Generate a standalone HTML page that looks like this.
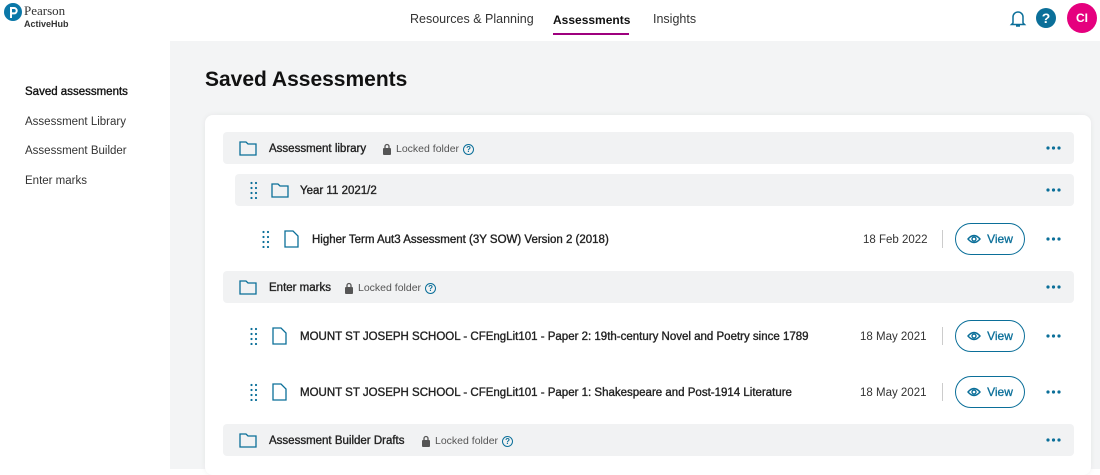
<!DOCTYPE html><html><head><style>
*{margin:0;padding:0;box-sizing:border-box}
body{width:1100px;height:469px;overflow:hidden;background:#fff;font-family:"Liberation Sans",sans-serif;color:#222;position:relative}
.a{position:absolute}
.nav{font-size:12.5px;color:#333;top:12px}
.side{left:25px;font-size:11.5px;color:#333}
.main{left:170px;top:41px;width:930px;height:428px;background:#f3f4f5}
.card{left:205px;top:115px;width:886px;height:360px;background:#fff;border-radius:8px;box-shadow:0 0 6px rgba(0,0,0,.06)}
.row{background:#f1f2f3;border-radius:4px;height:32px}
.t{font-size:11.5px;color:#222;-webkit-text-stroke:0.35px #222;white-space:nowrap}
.lk{font-size:10.5px;color:#555;display:flex;align-items:center;gap:4px}
.date{font-size:11.5px;color:#333}
.view{width:70px;height:32px;border:1.5px solid #0b6f99;border-radius:16px;color:#0b6f99;font-size:12px;-webkit-text-stroke:0.3px #0b6f99;display:flex;align-items:center;justify-content:center;gap:6px}
.sep{width:1px;height:18px;background:#ccc}
.q{width:11px;height:11px;border:1.2px solid #0b6f99;border-radius:50%;color:#0b6f99;font-size:8px;text-align:center;line-height:9px;font-weight:bold}
</style></head><body>
<svg class="a" style="left:4px;top:3px" width="18" height="18"><circle cx="9" cy="9" r="9" fill="#0b78a8"/><path d="M7 15V5h3a2.7 2.7 0 0 1 0 5.4h-3" stroke="#fff" stroke-width="2" fill="none"/></svg>
<div class="a" style="left:24px;top:3px;font-family:'Liberation Serif',serif;font-size:13px;color:#333">Pearson</div>
<div class="a" style="left:24px;top:19px;font-size:9px;font-weight:bold;color:#333">ActiveHub</div>
<div class="a nav" style="left:410px">Resources &amp; Planning</div>
<div class="a nav" style="left:553px;font-weight:bold;color:#111;font-size:12px;top:13px">Assessments</div>
<div class="a" style="left:553px;top:33px;width:76px;height:2px;background:#9e007e"></div>
<div class="a nav" style="left:653px">Insights</div>
<svg class="a" style="left:1009px;top:9px" width="18" height="19"><path d="M4 14V8a5 5 0 0 1 10 0v6l1.5 1.5h-13z M7 17h4" stroke="#0b6f99" stroke-width="1.5" fill="none"/></svg>
<div class="a" style="left:1036px;top:8px;width:20px;height:20px;border-radius:50%;background:#0b6f99;color:#fff;font-weight:bold;font-size:14px;text-align:center;line-height:20px">?</div>
<div class="a" style="left:1067px;top:3px;width:30px;height:30px;border-radius:50%;background:#e5007e;color:#fff;font-weight:bold;font-size:12px;text-align:center;line-height:30px">CI</div>
<div class="a side" style="top:86px;color:#111;-webkit-text-stroke:0.35px #111">Saved assessments</div>
<div class="a side" style="top:116px">Assessment Library</div>
<div class="a side" style="top:145px">Assessment Builder</div>
<div class="a side" style="top:175px">Enter marks</div>
<div class="a main"></div>
<div class="a" style="left:205px;top:68px;font-size:21px;font-weight:bold;color:#111">Saved Assessments</div>
<div class="a card"></div>

<div class="a row" style="left:223px;top:132px;width:851px"></div>
<div class="a row" style="left:235px;top:174px;width:839px"></div>
<div class="a row" style="left:223px;top:271px;width:851px"></div>
<div class="a row" style="left:223px;top:424px;width:851px"></div>

<svg class="a" style="left:239px;top:141px" width="18" height="15"><path d="M1 1h6l2 2h8v11H1z" stroke="#0b6f99" stroke-width="1.3" fill="none"/></svg>
<svg class="a" style="left:271px;top:183px" width="18" height="15"><path d="M1 1h6l2 2h8v11H1z" stroke="#0b6f99" stroke-width="1.3" fill="none"/></svg>
<svg class="a" style="left:239px;top:280px" width="18" height="15"><path d="M1 1h6l2 2h8v11H1z" stroke="#0b6f99" stroke-width="1.3" fill="none"/></svg>
<svg class="a" style="left:239px;top:433px" width="18" height="15"><path d="M1 1h6l2 2h8v11H1z" stroke="#0b6f99" stroke-width="1.3" fill="none"/></svg>

<div class="a t" style="left:269px;top:143px">Assessment library</div>
<div class="a lk" style="left:382px;top:143px"><svg width="10" height="12"><rect x="1" y="5" width="8" height="7" rx="1" fill="#555"/><path d="M3 5V3.5a2 2 0 0 1 4 0V5" stroke="#555" stroke-width="1.3" fill="none"/></svg>Locked folder <span class="q">?</span></div>
<div class="a t" style="left:300px;top:185px">Year 11 2021/2</div>
<div class="a t" style="left:269px;top:282px">Enter marks</div>
<div class="a lk" style="left:344px;top:282px"><svg width="10" height="12"><rect x="1" y="5" width="8" height="7" rx="1" fill="#555"/><path d="M3 5V3.5a2 2 0 0 1 4 0V5" stroke="#555" stroke-width="1.3" fill="none"/></svg>Locked folder <span class="q">?</span></div>
<div class="a t" style="left:269px;top:435px">Assessment Builder Drafts</div>
<div class="a lk" style="left:421px;top:435px"><svg width="10" height="12"><rect x="1" y="5" width="8" height="7" rx="1" fill="#555"/><path d="M3 5V3.5a2 2 0 0 1 4 0V5" stroke="#555" stroke-width="1.3" fill="none"/></svg>Locked folder <span class="q">?</span></div>

<svg class="a" style="left:250px;top:181px" width="8" height="18"><g fill="#0b6f99"><circle cx="1.5" cy="2" r="1.1"/><circle cx="6" cy="2" r="1.1"/><circle cx="1.5" cy="7" r="1.1"/><circle cx="6" cy="7" r="1.1"/><circle cx="1.5" cy="12" r="1.1"/><circle cx="6" cy="12" r="1.1"/><circle cx="1.5" cy="17" r="1.1"/><circle cx="6" cy="17" r="1.1"/></g></svg>
<svg class="a" style="left:262px;top:230px" width="8" height="18"><g fill="#0b6f99"><circle cx="1.5" cy="2" r="1.1"/><circle cx="6" cy="2" r="1.1"/><circle cx="1.5" cy="7" r="1.1"/><circle cx="6" cy="7" r="1.1"/><circle cx="1.5" cy="12" r="1.1"/><circle cx="6" cy="12" r="1.1"/><circle cx="1.5" cy="17" r="1.1"/><circle cx="6" cy="17" r="1.1"/></g></svg>
<svg class="a" style="left:250px;top:327px" width="8" height="18"><g fill="#0b6f99"><circle cx="1.5" cy="2" r="1.1"/><circle cx="6" cy="2" r="1.1"/><circle cx="1.5" cy="7" r="1.1"/><circle cx="6" cy="7" r="1.1"/><circle cx="1.5" cy="12" r="1.1"/><circle cx="6" cy="12" r="1.1"/><circle cx="1.5" cy="17" r="1.1"/><circle cx="6" cy="17" r="1.1"/></g></svg>
<svg class="a" style="left:250px;top:383px" width="8" height="18"><g fill="#0b6f99"><circle cx="1.5" cy="2" r="1.1"/><circle cx="6" cy="2" r="1.1"/><circle cx="1.5" cy="7" r="1.1"/><circle cx="6" cy="7" r="1.1"/><circle cx="1.5" cy="12" r="1.1"/><circle cx="6" cy="12" r="1.1"/><circle cx="1.5" cy="17" r="1.1"/><circle cx="6" cy="17" r="1.1"/></g></svg>

<svg class="a" style="left:284px;top:230px" width="15" height="18"><path d="M1 1h8l5 5v11H1z" stroke="#0b6f99" stroke-width="1.3" fill="none"/></svg>
<svg class="a" style="left:272px;top:327px" width="15" height="18"><path d="M1 1h8l5 5v11H1z" stroke="#0b6f99" stroke-width="1.3" fill="none"/></svg>
<svg class="a" style="left:272px;top:383px" width="15" height="18"><path d="M1 1h8l5 5v11H1z" stroke="#0b6f99" stroke-width="1.3" fill="none"/></svg>

<div class="a t" style="left:312px;top:234px">Higher Term Aut3 Assessment (3Y SOW) Version 2 (2018)</div>
<div class="a t" style="left:300px;top:331px">MOUNT ST JOSEPH SCHOOL - CFEngLit101 - Paper 2: 19th-century Novel and Poetry since 1789</div>
<div class="a t" style="left:300px;top:387px">MOUNT ST JOSEPH SCHOOL - CFEngLit101 - Paper 1: Shakespeare and Post-1914 Literature</div>

<div class="a date" style="left:863px;top:234px">18 Feb 2022</div>
<div class="a date" style="left:860px;top:331px">18 May 2021</div>
<div class="a date" style="left:860px;top:387px">18 May 2021</div>
<div class="a sep" style="left:942px;top:230px"></div>
<div class="a sep" style="left:942px;top:327px"></div>
<div class="a sep" style="left:942px;top:383px"></div>

<div class="a view" style="left:955px;top:223px"><svg width="14" height="10"><path d="M1 5Q7-2 13 5Q7 12 1 5z" stroke="#0b6f99" stroke-width="1.4" fill="none"/><circle cx="7" cy="5" r="2" fill="none" stroke="#0b6f99" stroke-width="1.4"/></svg>View</div>
<div class="a view" style="left:955px;top:320px"><svg width="14" height="10"><path d="M1 5Q7-2 13 5Q7 12 1 5z" stroke="#0b6f99" stroke-width="1.4" fill="none"/><circle cx="7" cy="5" r="2" fill="none" stroke="#0b6f99" stroke-width="1.4"/></svg>View</div>
<div class="a view" style="left:955px;top:376px"><svg width="14" height="10"><path d="M1 5Q7-2 13 5Q7 12 1 5z" stroke="#0b6f99" stroke-width="1.4" fill="none"/><circle cx="7" cy="5" r="2" fill="none" stroke="#0b6f99" stroke-width="1.4"/></svg>View</div>

<svg class="a" style="left:1046px;top:146px" width="15" height="4"><g fill="#0b6f99"><circle cx="2" cy="2" r="1.6"/><circle cx="7.5" cy="2" r="1.6"/><circle cx="13" cy="2" r="1.6"/></g></svg>
<svg class="a" style="left:1046px;top:188px" width="15" height="4"><g fill="#0b6f99"><circle cx="2" cy="2" r="1.6"/><circle cx="7.5" cy="2" r="1.6"/><circle cx="13" cy="2" r="1.6"/></g></svg>
<svg class="a" style="left:1046px;top:237px" width="15" height="4"><g fill="#0b6f99"><circle cx="2" cy="2" r="1.6"/><circle cx="7.5" cy="2" r="1.6"/><circle cx="13" cy="2" r="1.6"/></g></svg>
<svg class="a" style="left:1046px;top:285px" width="15" height="4"><g fill="#0b6f99"><circle cx="2" cy="2" r="1.6"/><circle cx="7.5" cy="2" r="1.6"/><circle cx="13" cy="2" r="1.6"/></g></svg>
<svg class="a" style="left:1046px;top:334px" width="15" height="4"><g fill="#0b6f99"><circle cx="2" cy="2" r="1.6"/><circle cx="7.5" cy="2" r="1.6"/><circle cx="13" cy="2" r="1.6"/></g></svg>
<svg class="a" style="left:1046px;top:390px" width="15" height="4"><g fill="#0b6f99"><circle cx="2" cy="2" r="1.6"/><circle cx="7.5" cy="2" r="1.6"/><circle cx="13" cy="2" r="1.6"/></g></svg>
<svg class="a" style="left:1046px;top:438px" width="15" height="4"><g fill="#0b6f99"><circle cx="2" cy="2" r="1.6"/><circle cx="7.5" cy="2" r="1.6"/><circle cx="13" cy="2" r="1.6"/></g></svg>
</body></html>
